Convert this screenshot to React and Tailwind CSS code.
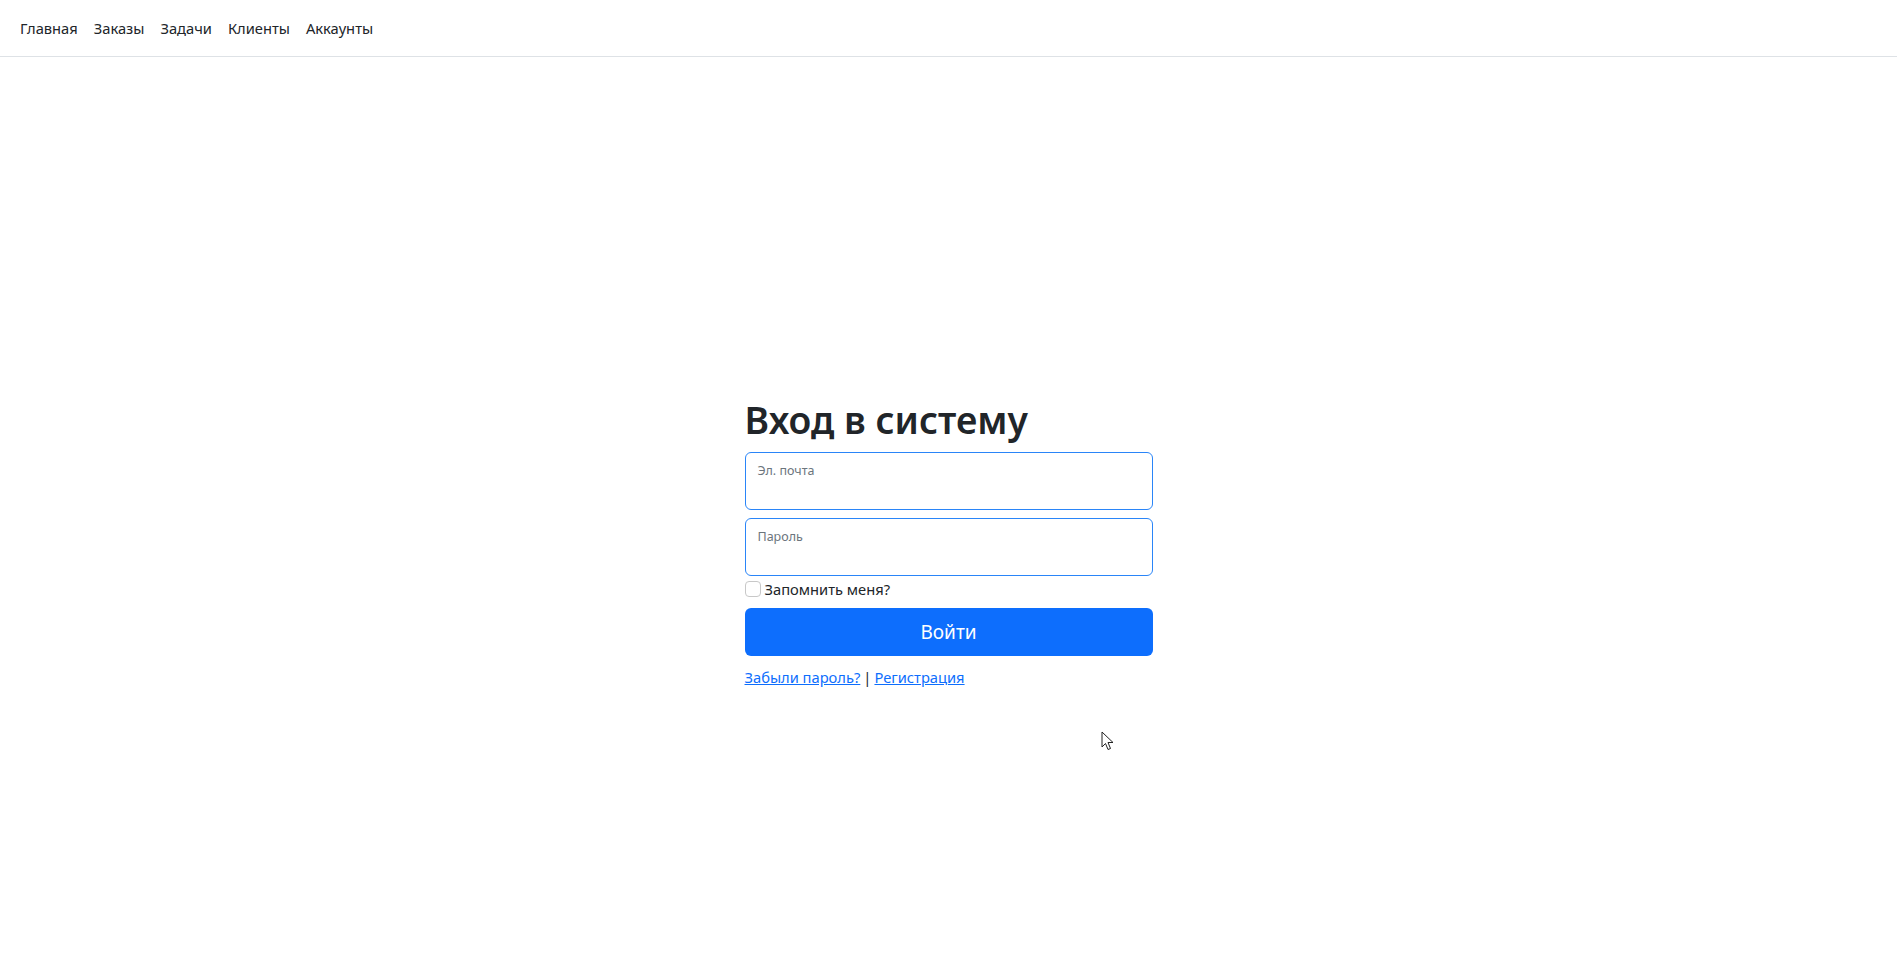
import React from "react";

export default function App() {
  return (
    <div className="relative min-h-[954px] bg-white text-[#212529] font-['Noto_Sans',Arial,sans-serif]">
      <nav className="flex h-[57px] items-center border-b border-[#dee2e6] px-[12px]">
        {["Главная", "Заказы", "Задачи", "Клиенты", "Аккаунты"].map((t) => (
          <a key={t} href="#" className="px-[8px] text-[14.7px] text-[#212529] no-underline">
            {t}
          </a>
        ))}
      </nav>
      <main className="flex justify-center pt-[341px]">
        <form className="w-[408px]" onSubmit={(e) => e.preventDefault()}>
          <h1 className="mb-[9px] text-[37.3px] font-semibold leading-[1.2] text-[#212529]">Вход в систему</h1>
          <div className="relative mb-[8px] h-[58px] rounded-[6px] border border-[#2a85f8] bg-white">
            <span className="absolute left-[12px] top-[9px] text-[12.5px] text-[#6c757d]">Эл. почта</span>
          </div>
          <div className="relative mb-[1px] h-[58px] rounded-[6px] border border-[#2a85f8] bg-white">
            <span className="absolute left-[12px] top-[9px] text-[12.5px] text-[#6c757d]">Пароль</span>
          </div>
          <label className="flex h-[24px] items-center gap-[4px] text-[14.7px] leading-[24px]">
            <span className="inline-block h-[16px] w-[16px] rounded-[4px] border border-[#c8c8c8] bg-white" />
            Запомнить меня?
          </label>
          <button
            type="submit"
            className="mt-[7px] flex h-[48px] w-full items-center justify-center rounded-[6px] bg-[#0d6efd] text-[19px] text-white"
          >
            Войти
          </button>
          <div className="mt-[9px] text-[14.7px] leading-[24px]">
            <a href="#" className="text-[#0d6efd] underline">Забыли пароль?</a>
            <span className="mx-[3px] text-[#212529]">|</span>
            <a href="#" className="text-[#0d6efd] underline">Регистрация</a>
          </div>
        </form>
      </main>
      <svg className="absolute left-[1101px] top-[731px]" width="13" height="20" viewBox="0 0 13 20">
        <path d="M1 1 L1 16 L4.5 12.5 L7 18.5 L9.5 17.5 L7 11.5 L12 11.5 Z" fill="white" stroke="#222" strokeWidth="1" strokeLinejoin="round" />
      </svg>
    </div>
  );
}
